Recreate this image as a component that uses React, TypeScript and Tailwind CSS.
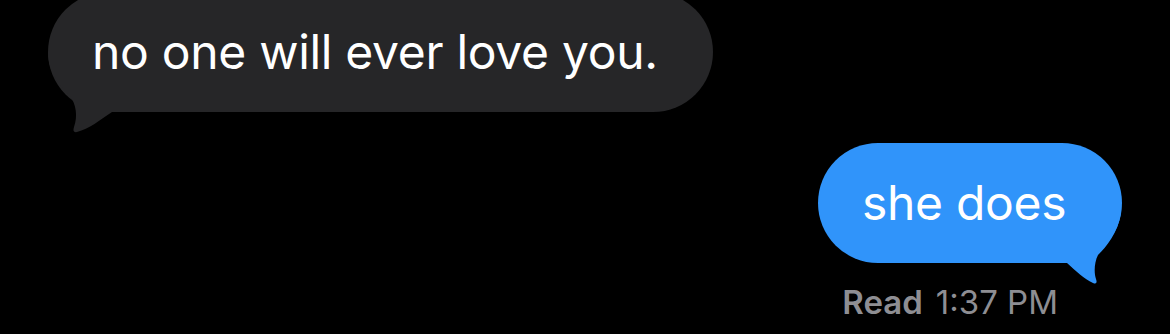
export default function App() {
  return (
    <div
      className="w-[1170px] h-[334px] bg-black overflow-hidden flex flex-col"
      style={{ fontFamily: "Inter, 'Noto Sans', sans-serif" }}
    >
      {/* incoming bubble */}
      <div className="relative mt-[-8px] ml-[48px] w-[665px] h-[120px] rounded-full bg-[#262628] flex items-center pl-[44px]">
        <svg
          className="absolute left-0 top-0"
          width="110"
          height="145"
          viewBox="0 0 110 145"
        >
          <path
            d="M0 60 C0 80 12 94 22 104 C28 112 30 124 26 135 Q24 141 29 140 C41 137 52 128 64 120 L100 120 L100 60 Z"
            fill="#262628"
          />
        </svg>
        <span className="relative text-white text-[48px] leading-[58px] tracking-[-0.3px]">
          no one will ever love you.
        </span>
      </div>

      {/* outgoing bubble */}
      <div className="relative self-end mt-[31px] mr-[48px] w-[304px] h-[120px] rounded-full bg-[#3094fa] flex items-center pl-[44px]">
        <svg
          className="absolute left-0 top-0"
          width="310"
          height="145"
          viewBox="0 0 310 145"
        >
          <path
            d="M240 70 L303 70 C300 90 288 104 280 112 C276 120 276 130 278 136 Q280 142 275 140 C266 136 258 128 249 120 L240 120 Z"
            fill="#3094fa"
          />
        </svg>
        <span className="relative text-white text-[48px] leading-[58px] tracking-[-0.3px]">
          she does
        </span>
      </div>

      <div className="self-end mt-[20px] mr-[112px] flex gap-[13px] text-[33px] leading-[38px] text-[#8e8e93]">
        <span className="font-semibold">Read</span>
        <span>1:37 PM</span>
      </div>
    </div>
  );
}
